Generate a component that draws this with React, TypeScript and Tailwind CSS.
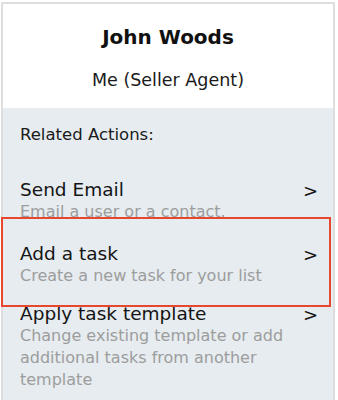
type Action = {
  title: string;
  lines: string[];
};

const actions: Action[] = [
  { title: "Send Email", lines: ["Email a user or a contact."] },
  { title: "Add a task", lines: ["Create a new task for your list"] },
  {
    title: "Apply task template",
    lines: [
      "Change existing template or add",
      "additional tasks from another",
      "template",
    ],
  },
];

function ActionRow({ action }: { action: Action }) {
  return (
    <div className="flex items-start justify-between">
      <div className="flex flex-col">
        <span className="text-[18.5px] leading-[22px] text-[#141414]">
          {action.title}
        </span>
        {action.lines.map((line) => (
          <span
            key={line}
            className="text-[16px] leading-[22px] text-[#9d9d9d] whitespace-nowrap"
          >
            {line}
          </span>
        ))}
      </div>
      <span className="text-[18px] leading-[22px] text-[#141414] mt-[1px]">
        &gt;
      </span>
    </div>
  );
}

export default function App() {
  return (
    <div className="w-[338px] h-[400px] bg-white overflow-hidden font-['DejaVu_Sans',sans-serif]">
      <div className="ml-[1px] mt-[2px] w-[334px] h-[398px] border-2 border-b-0 border-[#dedede] flex flex-col">
        <div className="bg-white flex flex-col items-center pt-[19px] pb-[16px]">
          <span className="text-[20px] leading-[28px] font-bold text-[#111]">
            John Woods
          </span>
          <span className="mt-[17px] text-[17.5px] leading-[24px] text-[#1a1a1a]">
            Me (Seller Agent)
          </span>
        </div>
        <div className="flex-1 bg-[#e6ecef] pt-[16px]">
          <div className="pl-[17px] text-[16.5px] leading-[22px] text-[#1a1a1a]">
            Related Actions:
          </div>
          <div className="mt-[33px] pl-[17px] pr-[15px] h-[38px]">
            <ActionRow action={actions[0]} />
          </div>
          <div className="relative z-10 -ml-[2px] w-[330px] h-[90px] border-2 border-[#e8472f] bg-[#e6ecef] pt-[24px] pl-[17px] pr-[11px]">
            <ActionRow action={actions[1]} />
          </div>
          <div className="-mt-[4px] pl-[17px] pr-[15px]">
            <ActionRow action={actions[2]} />
          </div>
        </div>
      </div>
    </div>
  );
}
